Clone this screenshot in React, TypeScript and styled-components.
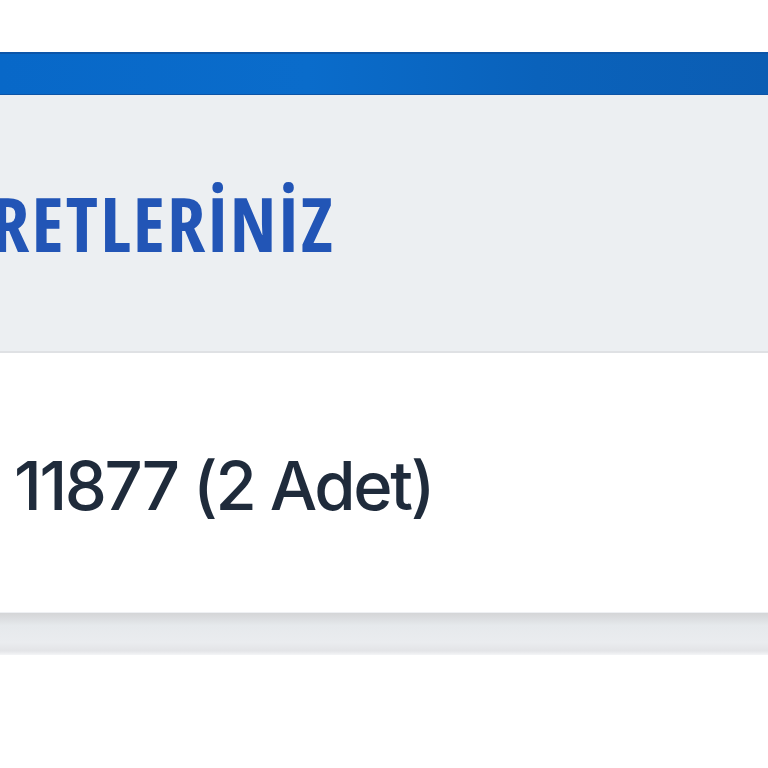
import styled, { createGlobalStyle } from 'styled-components'

const GlobalStyle = createGlobalStyle`
    html, body {
        margin: 0;
        padding: 0;
        background: #ffffff;
        font-family: Inter, 'Noto Sans', sans-serif;
    }
`

const App = () => {
    return (
        <Page>
            <GlobalStyle />
            <TopSpace />
            <BlueBar />
            <Header>
                <Title>RETLERİNİZ</Title>
            </Header>
            <Row>
                <Value>11877 (2 Adet)</Value>
            </Row>
            <Footer />
        </Page>
    )
}

export default App

const Page = styled.div`
    width: 768px;
    height: 768px;
    overflow: hidden;
    display: flex;
    flex-direction: column;
    background: #ffffff;
`
const TopSpace = styled.div`
    height: 52px;
`
const BlueBar = styled.div`
    height: 40px;
    border-top: 2px solid #0c55a8;
    border-bottom: 1px solid #0d54a6;
    background: linear-gradient(90deg, #0868c8 0%, #0a6ccb 40%, #0a62bb 70%, #0b5db3 100%);
`
const Header = styled.div`
    height: 256px;
    display: flex;
    align-items: center;
    background: #eceff2;
    border-bottom: 2px solid #dfe1e4;
    box-shadow: 0 1px 0 #eeeef3;
`
const Title = styled.h1`
    margin: 0 0 0 -9px;
    font-family: 'Open Sans', sans-serif;
    font-stretch: 75%;
    font-size: 75px;
    font-weight: 700;
    color: #2255b6;
    letter-spacing: 2.2px;
    line-height: 1;
    white-space: nowrap;
`
const Row = styled.div`
    height: 259px;
    display: flex;
    align-items: center;
    padding-left: 14px;
    background: #ffffff;
`
const Value = styled.span`
    font-family: Inter, sans-serif;
    font-size: 67px;
    font-weight: 500;
    color: #1f2b3b;
    letter-spacing: -2.4px;
    line-height: 1;
    margin-top: 6px;
`
const Footer = styled.div`
    height: 42px;
    border-top: 1px solid #eef0f3;
    background: linear-gradient(180deg, #d4d5d7 0%, #e6e9ec 30%, #eaecef 70%, #e3e4e7 90%, #f4f5f7 100%);
`
